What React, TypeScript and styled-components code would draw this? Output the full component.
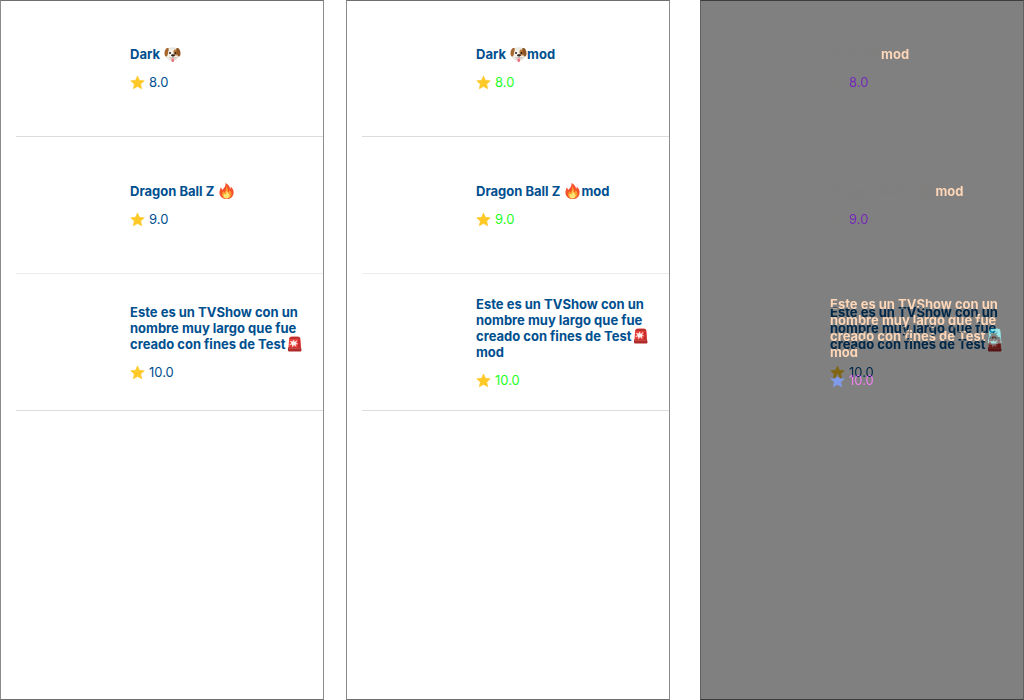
import React from "react";
import styled, { createGlobalStyle } from "styled-components";

const GlobalStyle = createGlobalStyle`
  * { box-sizing: border-box; }
  body { margin: 0; background: #ffffff; }
`;

const Board = styled.main`
  display: grid;
  grid-template-columns: 1fr 22px 1fr 30px 1fr;
  min-height: 100vh;
  font-family: Inter, "Liberation Sans", sans-serif;
`;

const Panel = styled.section<{ $column: number; $edge: string; $side: string }>`
  grid-column: ${(p) => p.$column};
  grid-row: 1;
  position: relative;
  display: grid;
  background: #ffffff;

  &::after {
    content: "";
    position: absolute;
    inset: 0;
    border: 1px solid ${(p) => p.$edge};
    border-left-color: ${(p) => p.$side};
    border-right-color: ${(p) => p.$side};
    pointer-events: none;
  }
`;

const ShowList = styled.ul<{ $layer?: "inverted" | "half" }>`
  grid-area: 1 / 1;
  margin: 0;
  padding: 0 0 0 16px;
  list-style: none;
  background: #ffffff;
  filter: ${(p) => (p.$layer === "inverted" ? "invert(1)" : "none")};
  opacity: ${(p) => (p.$layer === "half" ? 0.5 : 1)};
`;

const Row = styled.li<{ $line: string }>`
  display: flex;
  flex-direction: column;
  justify-content: center;
  gap: 12px;
  min-height: 137px;
  padding: 0 20px 0 114px;
  border-bottom: 1px solid ${(p) => p.$line};
`;

const Title = styled.h2`
  margin: 0;
  color: #004f8f;
  font-size: 13px;
  font-weight: 700;
  line-height: 16px;
`;

const Rating = styled.p<{ $color: string }>`
  display: flex;
  align-items: center;
  gap: 4px;
  margin: 0;
  color: ${(p) => p.$color};
  font-size: 13px;
  line-height: 16px;
`;

const Emoji = styled.svg`
  width: 17px;
  height: 16px;
  margin-left: 1px;
  vertical-align: -3px;
`;

const StarIcon = styled.svg`
  width: 15px;
  height: 15px;
`;

const Dog = () => (
  <Emoji viewBox="0 0 34 32" role="img" aria-label="dog">
    <path d="M7 6C10 3 24 3 27 6c3 4 3 10 2 15-1 5-7 8-12 8S6 26 5 21C4 15 4 10 7 6z" fill="#f3efe9" stroke="#cfc5b8" strokeWidth="1" />
    <path d="M20 8c3-2 7 0 8 3 1 4-1 8-4 8s-5-3-5-6c0-3 0-4 1-5z" fill="#b9793a" />
    <path d="M8 4C4 3 1 9 1 14c0 4 1 7 3 7 3 0 4-4 4-8 1-3 3-8 0-9z" fill="#a5672f" />
    <path d="M26 4c4-1 7 5 7 10 0 4-1 7-3 7-3 0-4-4-4-8-1-3-3-8 0-9z" fill="#8f5524" />
    <circle cx="12" cy="14" r="2" fill="#2b1b14" />
    <circle cx="23" cy="14" r="2" fill="#2b1b14" />
    <path d="M14 18c1-2 7-2 8 0 0 2-3 3-4 3s-4-1-4-3z" fill="#30211e" />
    <path d="M11 23c3 2 5 1 7-1 1 2 4 3 7 1" fill="none" stroke="#77655b" strokeWidth="1" />
    <path d="M15 25h5v4c0 4-5 4-5 0z" fill="#f06f7d" />
  </Emoji>
);

const Fire = () => (
  <Emoji viewBox="0 0 34 32" role="img" aria-label="fire">
    <path d="M15 0c6 3 9 7 9 12 1-1 2-3 1-5 5 3 7 9 6 14-1 7-6 11-13 11C10 32 4 28 3 21c-1-5 2-8 2-12 2 1 3 3 3 5 4-3 8-8 7-14z" fill="#f4512c" />
    <path d="M16 6c3 4 5 8 4 12 2 0 3-2 3-4 4 4 5 8 3 12-2 3-5 5-8 5-6 0-10-3-10-8 0-3 2-5 3-7 0 1 1 3 2 3 3-3 4-7 3-13z" fill="#ff9b2d" />
    <path d="M17 15c1 4 6 6 6 10 0 4-3 6-6 6s-6-2-6-6c0-2 1-3 2-4 0 1 1 2 2 2 2-2 2-5 2-8z" fill="#ffe478" />
  </Emoji>
);

const Siren = () => (
  <Emoji viewBox="2 0 34 32" role="img" aria-label="siren">
    <path d="M6 7c0-4 2-6 6-6h11c4 0 6 2 6 6l1 17H5z" fill="#e9413b" />
    <path d="M7 6c1-3 3-4 6-4h10c3 0 5 1 5 4z" fill="#b93430" />
    <path d="M24 7h4l1 16h-6z" fill="#c72d2a" />
    <path d="M4 23h26l1 5c0 2-1 3-3 3H7c-2 0-3-1-3-3z" fill="#b02a2a" />
    <path d="M6 25h23" stroke="#dc6a61" strokeWidth="1" />
    <path d="M16 7l1 5 6-4-3 6 5 2-6 1 2 5-5-4-3 5-1-6-6 1 5-4-4-4 6 1z" fill="#fff0ed" />
  </Emoji>
);

const Star = () => (
  <StarIcon viewBox="0 0 24 24" aria-hidden="true">
    <path d="M12 1.500l3.100 7 7.700.8-5.700 5.200 1.600 7.600L12 18.200l-6.700 3.900 1.600-7.600L1.200 9.300l7.700-.8z" fill="#ffc928" stroke="#ffc928" strokeLinejoin="round" />
  </StarIcon>
);

const shows = [
  { name: "Dark ", Icon: Dog, score: "8.0", line: "#dcdcdc" },
  { name: "Dragon Ball Z ", Icon: Fire, score: "9.0", line: "#ededed" },
  {
    name: "Este es un TVShow con un nombre muy largo que fue creado con fines de Test",
    Icon: Siren,
    score: "10.0",
    line: "#dcdcdc",
  },
];

type ShowsProps = { modified?: boolean; layer?: "inverted" | "half" };

const Shows = ({ modified, layer }: ShowsProps) => (
  <ShowList $layer={layer}>
    {shows.map(({ name, Icon, score, line }) => (
      <Row key={score} $line={line}>
        <Title>
          {name}
          <Icon />
          {modified && "mod"}
        </Title>
        <Rating $color={modified ? "#1eff1e" : "#004f8f"}>
          <Star />
          {score}
        </Rating>
      </Row>
    ))}
  </ShowList>
);

export default function App() {
  return (
    <Board>
      <GlobalStyle />
      <Panel $column={1} $edge="#6e6e6e" $side="#8c8c8c" aria-label="Reference">
        <Shows />
      </Panel>
      <Panel $column={3} $edge="#6e6e6e" $side="#8c8c8c" aria-label="Modified">
        <Shows modified />
      </Panel>
      {/* Averaging the original with the inverted modification leaves grey wherever they agree. */}
      <Panel $column={5} $edge="#3c3c3c" $side="#606060" aria-label="Difference">
        <Shows modified layer="inverted" />
        <Shows layer="half" />
      </Panel>
    </Board>
  );
}
